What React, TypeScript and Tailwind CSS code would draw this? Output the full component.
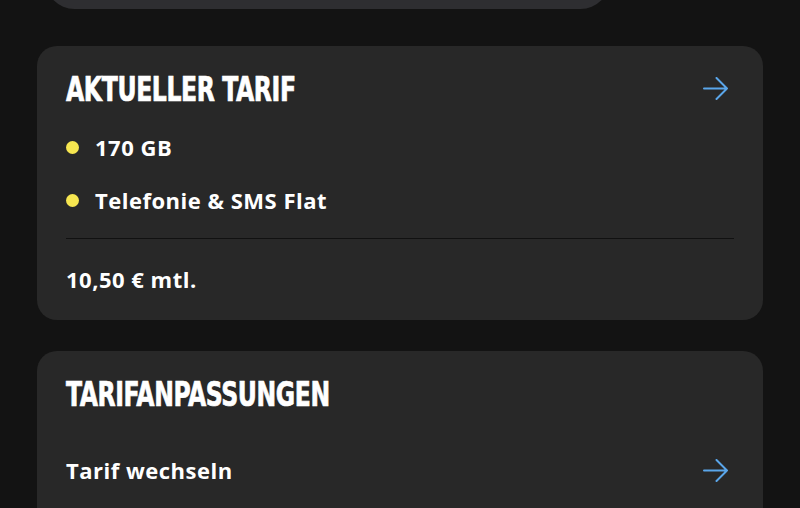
import React from "react";

const headingFont = {
  fontFamily: '"DejaVu Sans Condensed", "Liberation Sans", sans-serif',
};

function ArrowIcon() {
  return (
    <svg width="26" height="23" viewBox="0 0 26 23" fill="none" className="mr-[5px] shrink-0">
      <path
        d="M1 11.5h23M13.5 1l10.5 10.5L13.5 22"
        stroke="#5aa6ea"
        strokeWidth="2"
        strokeLinecap="round"
        strokeLinejoin="round"
      />
    </svg>
  );
}

function Heading({ children }: { children: React.ReactNode }) {
  return (
    <h2
      className="origin-left scale-x-[0.77] whitespace-nowrap text-[34px] font-bold uppercase leading-none tracking-[-0.5px] text-white [-webkit-text-stroke:0.7px_white]"
      style={headingFont}
    >
      {children}
    </h2>
  );
}

function Feature({ label }: { label: string }) {
  return (
    <li className="flex h-[53px] items-center gap-[16px]">
      <span className="h-[13px] w-[13px] rounded-full bg-[#f6e650]" />
      <span>{label}</span>
    </li>
  );
}

export default function App() {
  return (
    <div className="h-[508px] w-[800px] overflow-hidden bg-[#131313] font-['Open_Sans','Lato',sans-serif] text-[22px] font-bold tracking-[0.5px] text-white">
      {/* partially scrolled card above */}
      <div className="ml-[45px] -mt-[50px] h-[59px] w-[565px] rounded-[32px] bg-[#2e2e31]" />

      <div className="flex flex-col gap-[31px] px-[37px] pt-[37px]">
        {/* CURRENT TARIFF */}
        <section className="rounded-[20px] bg-[#282828] px-[29px] pt-[30px]">
          <div className="flex h-[25px] items-center justify-between">
            <Heading>Aktueller Tarif</Heading>
            <ArrowIcon />
          </div>
          <ul className="mt-[20px] pb-[11px]">
            <Feature label="170 GB" />
            <Feature label="Telefonie & SMS Flat" />
          </ul>
          <div className="h-px w-full bg-[#111111]" />
          <div className="flex h-[81px] items-center">10,50 € mtl.</div>
        </section>

        {/* TARIFF ADJUSTMENTS */}
        <section className="h-[200px] rounded-[20px] bg-[#282828] px-[29px] pt-[30px]">
          <div className="flex h-[25px] items-center">
            <Heading>Tarifanpassungen</Heading>
          </div>
          <div className="mt-[49px] flex h-[30px] items-center justify-between">
            <span>Tarif wechseln</span>
            <ArrowIcon />
          </div>
        </section>
      </div>
    </div>
  );
}
